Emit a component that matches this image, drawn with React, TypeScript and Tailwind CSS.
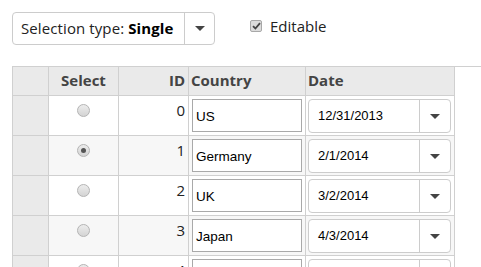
import React from "react";

const rows = [
  { id: 0, country: "US", date: "12/31/2013" },
  { id: 1, country: "Germany", date: "2/1/2014" },
  { id: 2, country: "UK", date: "3/2/2014" },
  { id: 3, country: "Japan", date: "4/3/2014" },
  { id: 4, country: "Italy", date: "5/4/2014" },
];

function Caret() {
  return (
    <svg width="10" height="5" viewBox="0 0 10 5" className="block">
      <path d="M0 0 L10 0 L5 5 Z" fill="#444" />
    </svg>
  );
}

function Radio({ checked }: { checked?: boolean }) {
  return (
    <span className="flex h-[13px] w-[13px] items-center justify-center rounded-full border border-[#b4b4b4] bg-gradient-to-b from-[#ececec] to-[#d4d4d4]">
      {checked && <span className="h-[5px] w-[5px] rounded-full bg-[#555]" />}
    </span>
  );
}

const cell = "border-b border-r border-[#d0d0d0]";

export default function App() {
  return (
    <div className="h-[267px] w-[481px] overflow-hidden bg-white font-['Open_Sans',sans-serif] text-[#222]">
      {/* toolbar */}
      <div className="flex items-center pl-3 pt-3">
        <div className="flex h-[33px] w-[203px] items-stretch rounded-[4px] border border-[#ccc]">
          <div className="flex flex-1 items-center pl-2 text-[15px] tracking-[0.1px]">
            Selection type:&nbsp;<b className="font-bold text-black">Single</b>
          </div>
          <div className="flex w-[30px] items-center justify-center border-l border-[#ccc]">
            <Caret />
          </div>
        </div>
        <label className="-mt-[5px] ml-[35px] flex items-center gap-[8px] text-[15px]">
          <span className="flex h-[12px] w-[12px] items-center justify-center rounded-[2px] border border-[#a8a8a8] bg-[#dcdcdc]">
            <svg width="9" height="8" viewBox="0 0 9 8">
              <path d="M1 4.2 L3.4 6.5 L8 1.2" stroke="#444" strokeWidth="1.8" fill="none" />
            </svg>
          </span>
          Editable
        </label>
      </div>

      {/* grid */}
      <div className="ml-3 mt-[21px] border-l border-t border-[#d0d0d0]">
        <div className="flex h-[29px] text-[15px] font-bold text-[#444]">
          <div className={`w-[36px] bg-[#eaeaea] ${cell}`} />
          <div className={`w-[70px] bg-[#eaeaea] pt-[2px] text-center ${cell}`}>Select</div>
          <div className={`w-[70px] bg-[#eaeaea] pr-[3px] pt-[2px] text-right ${cell}`}>ID</div>
          <div className={`w-[117px] bg-[#eaeaea] pl-[2px] pt-[2px] ${cell}`}>Country</div>
          <div className={`w-[149px] bg-[#eaeaea] pl-[2px] pt-[2px] ${cell}`}>Date</div>
        </div>
        {rows.map((r, i) => {
          const bg = i % 2 ? "bg-[#f7f7f7]" : "bg-white";
          return (
            <div key={r.id} className="flex h-[40px]">
              <div className={`w-[36px] bg-[#eaeaea] ${cell}`} />
              <div className={`flex w-[70px] justify-center pt-[8px] ${bg} ${cell}`}>
                <Radio checked={r.id === 1} />
              </div>
              <div className={`w-[70px] pr-[3px] pt-[3px] text-right text-[15px] ${bg} ${cell}`}>
                {r.id}
              </div>
              <div className={`w-[117px] p-[3px] ${bg} ${cell}`}>
                <div className="flex h-[33px] items-center border border-[#a9a9a9] bg-white pl-[3px] pt-[4px] font-[family-name:Liberation_Sans,Arial,sans-serif] text-[13.5px] text-black">
                  {r.country}
                </div>
              </div>
              <div className={`w-[149px] pb-[3px] pl-[2px] pr-[3px] pt-[3px] ${bg} ${cell}`}>
                <div className="flex h-[34px] items-stretch rounded-[4px] border border-[#ccc] bg-white">
                  <div className="flex flex-1 items-center pl-[9px] font-[family-name:Liberation_Sans,Arial,sans-serif] text-[13px] text-black">
                    {r.date}
                  </div>
                  <div className="flex w-[31px] items-center justify-center border-l border-[#ccc]">
                    <Caret />
                  </div>
                </div>
              </div>
            </div>
          );
        })}
      </div>
    </div>
  );
}
